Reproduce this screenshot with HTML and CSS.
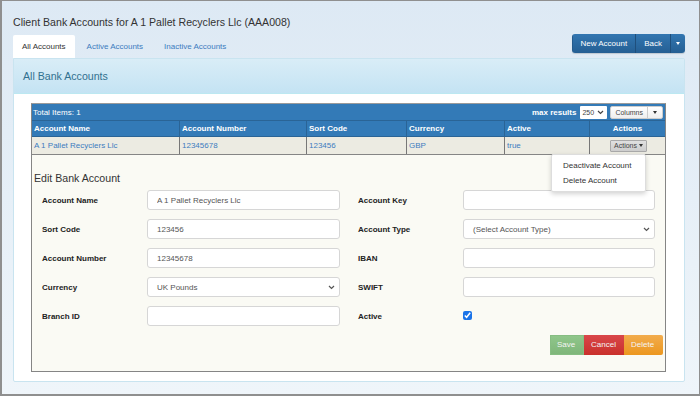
FILE: index.html
```html
<!DOCTYPE html>
<html lang="en">
<head>
    <meta charset="UTF-8">
    <title>Client Bank Accounts</title>
    <link rel="stylesheet" href="styles.css">
</head>
<body>
    <div class="frame">
        <h1 class="page-title">Client Bank Accounts for A 1 Pallet Recyclers Llc (AAA008)</h1>

        <!-- Tabs and top buttons -->
        <div class="top-row">
            <ul class="tabs">
                <li class="tab active">All Accounts</li>
                <li class="tab">Active Accounts</li>
                <li class="tab">Inactive Accounts</li>
            </ul>
            <div class="btn-group">
                <span class="btn-blue">New Account</span>
                <span class="btn-blue">Back</span>
                <span class="btn-blue btn-caret"><span class="caret"></span></span>
            </div>
        </div>

        <!-- Panel -->
        <section class="panel">
            <div class="panel-heading">All Bank Accounts</div>
            <div class="panel-body">
                <div class="grid">
                    <div class="grid-bar">
                        <span>Total Items: 1</span>
                        <div class="bar-right">
                            <b>max results</b>
                            <span class="mini-select">250 <svg width="7" height="5" viewBox="0 0 7 5"><path d="M1 1l2.5 2.5L6 1" fill="none" stroke="#444" stroke-width="1.2"/></svg></span>
                            <span class="mini-btn"><span class="mini-label">Columns</span><span class="mini-caret"><span class="caret dark"></span></span></span>
                        </div>
                    </div>
                    <div class="grid-row grid-head">
                        <div class="c1">Account Name</div>
                        <div class="c2">Account Number</div>
                        <div class="c3">Sort Code</div>
                        <div class="c4">Currency</div>
                        <div class="c5">Active</div>
                        <div class="c6 center">Actions</div>
                    </div>
                    <div class="grid-row grid-data">
                        <div class="c1">A 1 Pallet Recyclers Llc</div>
                        <div class="c2">12345678</div>
                        <div class="c3">123456</div>
                        <div class="c4">GBP</div>
                        <div class="c5">true</div>
                        <div class="c6 center actions-cell">
                            <span class="actions-btn">Actions <span class="caret dark"></span></span>
                            <ul class="dropdown">
                                <li>Deactivate Account</li>
                                <li>Delete Account</li>
                            </ul>
                        </div>
                    </div>

                    <!-- Edit form -->
                    <div class="edit-area">
                        <h2 class="edit-title">Edit Bank Account</h2>
                        <div class="form-grid">
                            <label>Account Name</label>
                            <input class="field" type="text" value="A 1 Pallet Recyclers Llc">
                            <label class="right">Account Key</label>
                            <input class="field" type="text" value="">

                            <label>Sort Code</label>
                            <input class="field" type="text" value="123456">
                            <label class="right">Account Type</label>
                            <div class="field select">(Select Account Type)<svg width="7" height="5" viewBox="0 0 7 5"><path d="M1 1l2.5 2.5L6 1" fill="none" stroke="#555" stroke-width="1.2"/></svg></div>

                            <label>Account Number</label>
                            <input class="field" type="text" value="12345678">
                            <label class="right">IBAN</label>
                            <input class="field" type="text" value="">

                            <label>Currency</label>
                            <div class="field select">UK Pounds<svg width="7" height="5" viewBox="0 0 7 5"><path d="M1 1l2.5 2.5L6 1" fill="none" stroke="#555" stroke-width="1.2"/></svg></div>
                            <label class="right">SWIFT</label>
                            <input class="field" type="text" value="">

                            <label>Branch ID</label>
                            <input class="field" type="text" value="">
                            <label class="right">Active</label>
                            <div class="check-wrap"><input class="check" type="checkbox" checked></div>
                        </div>
                        <div class="form-buttons">
                            <span class="fbtn save">Save</span>
                            <span class="fbtn cancel">Cancel</span>
                            <span class="fbtn delete">Delete</span>
                        </div>
                    </div>
                </div>
            </div>
        </section>
    </div>
</body>
</html>
```

FILE: styles.css
```css
* {
    box-sizing: border-box;
}

body {
    margin: 0;
    padding: 0;
    font-family: "Liberation Sans", Arial, sans-serif;
    color: #333;
}

.frame {
    width: 700px;
    height: 396px;
    border: 1px solid #8f8f8f;
    border-left-width: 2px;
    border-bottom-width: 2px;
    background: linear-gradient(#dde9f4, #eff5fa);
    padding: 0 14px 0 11px;
    overflow: hidden;
}

.page-title {
    margin: 15px 0 0;
    font-size: 10.6px;
    line-height: 13px;
    font-weight: normal;
    color: #333;
}

/* Tabs + top buttons */
.top-row {
    display: flex;
    justify-content: space-between;
    margin-top: 6px;
    height: 23px;
}

.tabs {
    list-style: none;
    margin: 0;
    padding: 0;
    display: flex;
    gap: 3px;
}

.tab {
    padding: 0 9px;
    font-size: 8px;
    line-height: 23px;
    color: #3d7cbf;
    border-radius: 2px 2px 0 0;
}

.tab.active {
    background: #fff;
    color: #333;
}

.btn-group {
    display: flex;
    height: 19px;
    margin-top: -1px;
    border-radius: 3px;
    overflow: hidden;
    box-shadow: 0 1px 1px rgba(0, 0, 0, 0.15);
}

.btn-blue {
    display: flex;
    align-items: center;
    padding: 0 8px;
    font-size: 8px;
    color: #fff;
    background: linear-gradient(#3276b1, #255f93);
    border-left: 1px solid #1f4f7c;
}

.btn-blue:first-child {
    border-left: 1px solid #245b8d;
}

.btn-caret {
    padding: 0 5px;
}

.caret {
    display: inline-block;
    width: 0;
    height: 0;
    border-left: 2.5px solid transparent;
    border-right: 2.5px solid transparent;
    border-top: 3px solid #fff;
}

.caret.dark {
    border-top-color: #333;
}

/* Panel */
.panel {
    margin-top: 0;
    background: #fff;
    border: 1px solid #c9e4f0;
    border-radius: 0 2px 2px 2px;
    height: 324px;
}

.panel-heading {
    height: 35px;
    padding: 0 9px;
    display: flex;
    align-items: center;
    font-size: 10.6px;
    color: #31708f;
    background: linear-gradient(#d9edf7, #c4e3f3);
    border-bottom: 1px solid #bce8f1;
}

.panel-body {
    padding: 9px 18px 9px 17px;
}

/* Grid */
.grid {
    width: 635px;
    border: 1px solid #858585;
    border-top-color: #9a9a9a;
}

.grid-bar {
    height: 16px;
    background: #337ab7;
    color: #fff;
    font-size: 8px;
    display: flex;
    justify-content: space-between;
    align-items: center;
    padding: 0 2px 0 1px;
}

.bar-right {
    display: flex;
    align-items: center;
    gap: 3px;
}

.bar-right b {
    margin-right: 1px;
}

.mini-select {
    display: flex;
    align-items: center;
    gap: 3px;
    height: 13px;
    width: 27px;
    padding: 0 2px;
    background: #fff;
    color: #444;
    font-size: 7px;
    border-radius: 1px;
}

.mini-btn {
    display: flex;
    height: 13px;
    background: linear-gradient(#fff, #eee);
    border: 1px solid #ccc;
    border-radius: 2px;
    color: #444;
    font-size: 7px;
}

.mini-label {
    padding: 0 4px;
    line-height: 11px;
    border-right: 1px solid #ccc;
}

.mini-caret {
    width: 14px;
    display: flex;
    align-items: center;
    justify-content: center;
}

.grid-row {
    display: flex;
    font-size: 8px;
}

.grid-row > div {
    padding: 0 2px;
    border-left: 1px solid #2a6496;
}

.grid-row > div:first-child {
    border-left: none;
}

.c1 { width: 147px; }
.c2 { width: 127px; }
.c3 { width: 100px; }
.c4 { width: 98px; }
.c5 { width: 85px; }
.c6 { width: 76px; }

.center {
    text-align: center;
}

.grid-head {
    height: 17px;
    line-height: 16px;
    background: #337ab7;
    color: #fff;
    font-weight: bold;
    border-top: 1px solid #2a6496;
    border-bottom: 1px solid #2a6496;
}

.grid-data {
    height: 18px;
    line-height: 17px;
    background: #ecebe2;
    color: #3d7cbf;
    border-bottom: 1px solid #858585;
}

.grid-data > div {
    border-left-color: #777;
}

.actions-cell {
    position: relative;
    display: flex;
    align-items: center;
    justify-content: center;
    padding-left: 4px !important;
}

.actions-btn {
    display: inline-flex;
    align-items: center;
    gap: 2px;
    height: 12px;
    padding: 0 3px;
    font-size: 7px;
    line-height: 10px;
    color: #444;
    background: linear-gradient(#e0e0e0, #cdcdcd);
    border: 1px solid #a9a9a9;
    border-radius: 1px;
}

.dropdown {
    position: absolute;
    top: 17px;
    right: 19px;
    width: 95px;
    margin: 0;
    padding: 3px 0;
    list-style: none;
    background: #fff;
    border: 1px solid #ddd;
    border-radius: 2px;
    box-shadow: 0 2px 5px rgba(0, 0, 0, 0.18);
    text-align: left;
    color: #333;
    font-size: 8px;
    z-index: 5;
}

.dropdown li {
    padding: 0 11px;
    line-height: 15px;
}

/* Edit form */
.edit-area {
    height: 216px;
    background: #fafaf4;
    padding: 10px 10px 0 10px;
}

.edit-title {
    margin: 7px 0 0 -8px;
    font-size: 10.6px;
    line-height: 12px;
    font-weight: normal;
    color: #333;
}

.form-grid {
    display: grid;
    grid-template-columns: 105px 193px 123px 192px;
    row-gap: 9px;
    margin-top: 6px;
}

.form-grid label {
    font-size: 8px;
    font-weight: bold;
    color: #222;
    display: flex;
    align-items: center;
    height: 20px;
}

.form-grid label.right {
    padding-left: 18px;
}

.field {
    height: 20px;
    width: 100%;
    border: 1px solid #d6d6d6;
    border-radius: 3px;
    background: #fff;
    font-family: inherit;
    font-size: 8px;
    color: #555;
    padding: 0 9px;
    margin: 0;
    outline: none;
}

.select {
    display: flex;
    align-items: center;
    justify-content: space-between;
    padding-right: 4px;
}

.check-wrap {
    height: 20px;
}

.check {
    width: 9px;
    height: 9px;
    margin: 0;
    accent-color: #1a73e8;
}

.form-buttons {
    display: flex;
    justify-content: flex-end;
    margin-top: 9px;
    margin-right: -8px;
}

.fbtn {
    height: 20px;
    line-height: 20px;
    font-size: 8px;
    color: #f4f4f4;
    padding: 0 8px;
}

.save {
    width: 34px;
    background: linear-gradient(#8fc68a, #7fb67a);
    border: 1px solid #86bd82;
    padding: 0 6px;
    line-height: 18px;
}

.cancel {
    width: 40px;
    background: linear-gradient(#d9474a, #c9302c);
    padding: 0 7px;
}

.delete {
    width: 39px;
    background: linear-gradient(#f2ac4d, #ec971f);
    border-radius: 0 2px 2px 0;
    padding: 0 7px;
}
```
